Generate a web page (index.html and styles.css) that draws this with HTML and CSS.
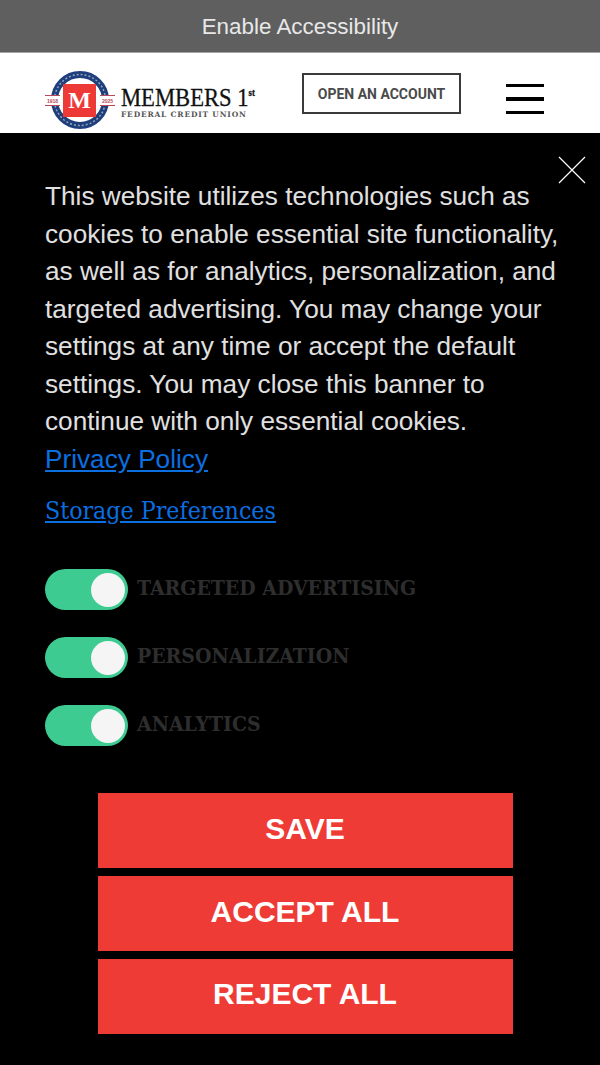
FILE: index.html
```html
<!DOCTYPE html>
<html lang="en">
<head>
    <meta charset="UTF-8">
    <meta name="viewport" content="width=device-width, initial-scale=1.0">
    <title>Members 1st Federal Credit Union</title>
    <link rel="stylesheet" href="styles.css">
</head>
<body>

<!-- Accessibility bar -->
<div class="access-bar">Enable Accessibility</div>

<!-- Header -->
<header class="site-header">
    <a class="logo" href="#">
        <svg class="seal" width="70" height="60" viewBox="0 0 70 60">
            <circle cx="35" cy="30" r="25.500" fill="none" stroke="#1f3f7a" stroke-width="7"/>
            <circle cx="35" cy="30" r="25.500" fill="none" stroke="#8fa3c4" stroke-width="1.500" stroke-dasharray="2 2"/>
            <rect x="0" y="25" width="15" height="11" fill="#fff"/>
            <rect x="55" y="25" width="15" height="11" fill="#fff"/>
            <path d="M0 25.500H15M0 35.500H15M55 25.500H70M55 35.500H70" stroke="#b8485a" stroke-width="1"/>
            <text class="seal-year" x="7.500" y="32.500">1918</text>
            <text class="seal-year" x="62.500" y="32.500">2025</text>
            <rect x="18" y="14" width="33" height="33" fill="#ee3a36"/>
            <text class="seal-m" x="34.500" y="38">M</text>
        </svg>
        <span class="logo-text">
            <span class="logo-name">MEMBERS 1<sup>st</sup></span>
            <span class="logo-sub">FEDERAL CREDIT UNION</span>
        </span>
    </a>
    <a class="open-account" href="#">OPEN AN ACCOUNT</a>
    <button class="menu-btn" aria-label="Menu"><span></span><span></span><span></span></button>
</header>

<!-- Cookie banner -->
<section class="cookie-banner">
    <button class="close-btn" aria-label="Close">
        <svg width="28" height="28" viewBox="0 0 28 28"><path d="M1 1L27 27M27 1L1 27" stroke="#fff" stroke-width="1.200"/></svg>
    </button>
    <p class="cookie-text">This website utilizes technologies such as cookies to enable essential site functionality, as well as for analytics, personalization, and targeted advertising. You may change your settings at any time or accept the default settings. You may close this banner to continue with only essential cookies. <a href="#">Privacy Policy</a></p>
    <a class="prefs-link" href="#">Storage Preferences</a>
    <div class="toggle-list">
        <div class="toggle-row"><span class="toggle"></span><span class="toggle-label">TARGETED ADVERTISING</span></div>
        <div class="toggle-row"><span class="toggle"></span><span class="toggle-label">PERSONALIZATION</span></div>
        <div class="toggle-row"><span class="toggle"></span><span class="toggle-label">ANALYTICS</span></div>
    </div>
    <div class="actions">
        <button class="action-btn">SAVE</button>
        <button class="action-btn">ACCEPT ALL</button>
        <button class="action-btn">REJECT ALL</button>
    </div>
</section>

</body>
</html>
```

FILE: styles.css
```css
body {
    margin: 0;
    font-family: "Liberation Sans", Arial, sans-serif;
    background-color: #000;
    height: 1065px;
    overflow: hidden;
}
a {
    text-decoration: none;
}
.access-bar {
    height: 52px;
    border-bottom: 1px solid #a5a5a5;
    background-color: #5f5f5f;
    color: #e8e8e8;
    font-size: 22.400px;
    line-height: 53px;
    text-align: center;
}
.site-header {
    height: 80px;
    background-color: #fff;
    display: flex;
    align-items: center;
    padding-left: 45px;
}
.logo {
    display: flex;
    align-items: center;
    width: 257px;
    margin-top: 14px;
    color: #111;
}
.seal {
    flex: none;
    margin-right: 6px;
}
.seal-year {
    fill: #b8485a;
    font-family: "Liberation Sans", sans-serif;
    font-size: 5px;
    font-weight: bold;
    text-anchor: middle;
}
.seal-m {
    fill: #fff;
    font-family: "Liberation Serif", serif;
    font-size: 24px;
    font-weight: bold;
    text-anchor: middle;
}
.logo-text {
    display: flex;
    flex-direction: column;
    margin-top: 4px;
}
.logo-name {
    font-family: "Liberation Serif", serif;
    font-size: 26px;
    line-height: 24px;
    transform: scaleX(0.87);
    transform-origin: left;
    white-space: nowrap;
    -webkit-text-stroke: 0.3px #111;
}
.logo-name sup {
    font-size: 10px;
    font-weight: bold;
    line-height: 0;
    vertical-align: 10px;
}
.logo-sub {
    margin-top: 1px;
    font-family: "DejaVu Serif", serif;
    font-size: 7.500px;
    font-weight: bold;
    line-height: 8px;
    letter-spacing: 0.8px;
    color: #555;
    white-space: nowrap;
}
.open-account {
    box-sizing: border-box;
    width: 159px;
    height: 41px;
    margin-top: 1px;
    border: 2px solid #3a3a3a;
    color: #4a4a4a;
    font-family: Roboto, sans-serif;
    font-size: 14px;
    font-weight: bold;
    line-height: 39px;
    text-align: center;
    white-space: nowrap;
}
.menu-btn {
    display: flex;
    flex-direction: column;
    gap: 10px;
    width: 38px;
    margin: 12px 0 0 45px;
    padding: 0;
    border: none;
    background: none;
}
.menu-btn span {
    height: 3.500px;
    background-color: #000;
}
.cookie-banner {
    position: relative;
    padding: 45px 30px 0 45px;
    color: #e0e0e0;
}
.close-btn {
    position: absolute;
    top: 23px;
    right: 14px;
    padding: 0;
    border: none;
    background: none;
    line-height: 0;
}
.cookie-text {
    margin: 0;
    font-size: 26.200px;
    line-height: 37.500px;
}
.cookie-text a {
    display: block;
    color: #0b6fe0;
    text-decoration: underline;
}
.prefs-link {
    display: inline-block;
    margin-top: 15px;
    color: #0b6fe0;
    font-family: "DejaVu Serif Condensed", "DejaVu Serif", serif;
    font-stretch: condensed;
    font-size: 24.700px;
    line-height: 36px;
    text-decoration: underline;
}
.toggle-list {
    display: flex;
    flex-direction: column;
    gap: 27px;
    margin-top: 40px;
}
.toggle-row {
    display: flex;
    align-items: center;
    gap: 9px;
}
.toggle {
    position: relative;
    width: 83px;
    height: 41px;
    border-radius: 21px;
    background-color: #3dcb91;
}
.toggle::after {
    content: "";
    position: absolute;
    top: 3.500px;
    right: 3.500px;
    width: 34px;
    height: 34px;
    border-radius: 50%;
    background-color: #f5f5f5;
}
.toggle-label {
    margin-bottom: 4px;
    color: #2e2e2e;
    font-family: "DejaVu Serif Condensed", "DejaVu Serif", serif;
    font-stretch: condensed;
    font-size: 21px;
    font-weight: bold;
}
.actions {
    display: flex;
    flex-direction: column;
    align-items: center;
    gap: 8px;
    width: 515px;
    margin: 47px 0 0 2.500px;
}
.action-btn {
    width: 415px;
    height: 75px;
    padding: 0 0 4px;
    border: none;
    background-color: #ef3b36;
    color: #fff;
    font-family: "Liberation Sans", Arial, sans-serif;
    font-size: 30px;
    font-weight: bold;
}
.action-btn + .action-btn + .action-btn {
    margin-top: -0.500px;
}
```
